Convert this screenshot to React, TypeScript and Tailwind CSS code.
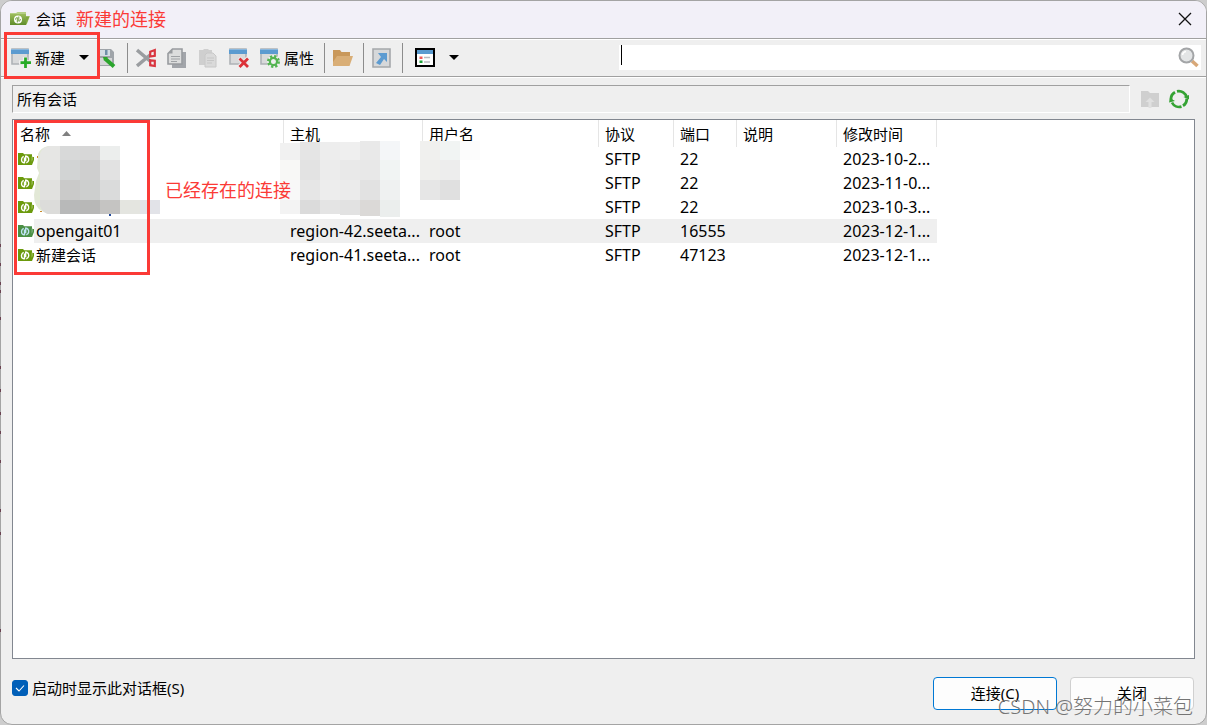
import React, { useState } from 'react';

type Session = {
  name: string;
  host: string;
  user: string;
  protocol: string;
  port: string;
  note: string;
  modified: string;
};

const sessions: Session[] = [
  { name: '', host: '', user: '', protocol: 'SFTP', port: '22', note: '', modified: '2023-10-2...' },
  { name: '', host: '', user: '', protocol: 'SFTP', port: '22', note: '', modified: '2023-11-0...' },
  { name: '', host: '', user: '', protocol: 'SFTP', port: '22', note: '', modified: '2023-10-3...' },
  { name: 'opengait01', host: 'region-42.seeta...', user: 'root', protocol: 'SFTP', port: '16555', note: '', modified: '2023-12-1...' },
  { name: '新建会话', host: 'region-41.seeta...', user: 'root', protocol: 'SFTP', port: '47123', note: '', modified: '2023-12-1...' },
];

const columns = ['主机', '用户名', '协议', '端口', '说明', '修改时间'];

// Blurred-out blocks: x, y, width, height, colour
const mosaic: [number, number, number, number, string][] = [
  [60, 146, 20, 14, '#d8d9d9'], [80, 146, 20, 14, '#d7d7d7'], [100, 146, 20, 14, '#eceeed'],
  [60, 160, 20, 20, '#d2d4d4'], [80, 160, 20, 20, '#cfcfcf'], [100, 160, 20, 20, '#e2e2e2'],
  [60, 180, 20, 20, '#cacac9'], [80, 180, 20, 20, '#cdcfce'], [100, 180, 20, 20, '#dadbdb'],
  [60, 200, 20, 14, '#b8b9b9'], [80, 200, 20, 14, '#b8b8b7'], [100, 200, 20, 14, '#c5c4c2'],
  [120, 200, 20, 14, '#e4e5e0'], [140, 200, 20, 14, '#e2e3e8'],
  [280, 143, 20, 17, '#f1f1f1'], [300, 142, 20, 18, '#e5e5e5'], [320, 142, 20, 18, '#ededed'],
  [340, 142, 20, 18, '#efefef'], [360, 141, 20, 19, '#e9e9e9'], [380, 141, 20, 19, '#f4f6f8'],
  [280, 160, 20, 20, '#f8f8f6'], [300, 160, 20, 20, '#e3e3e3'], [320, 160, 20, 20, '#ececec'],
  [340, 160, 20, 20, '#e9e9e9'], [360, 160, 20, 20, '#e8e8e8'], [380, 160, 20, 20, '#f1f4f3'],
  [280, 180, 20, 20, '#f8f8f8'], [300, 180, 20, 20, '#e6e6e6'], [320, 180, 20, 20, '#ededed'],
  [340, 180, 20, 20, '#ebebeb'], [360, 180, 20, 20, '#e2e2e2'], [380, 180, 20, 20, '#eff1f1'],
  [280, 200, 20, 14, '#f3f3f3'], [300, 200, 20, 14, '#dbdbdb'], [320, 200, 20, 14, '#e4e4e4'],
  [340, 200, 20, 15, '#e2e2e2'], [360, 200, 20, 16, '#dbd9d7'], [380, 200, 20, 17, '#ebeeed'],
  [420, 141, 20, 19, '#f0f0ee'], [440, 141, 20, 19, '#f1f4f3'], [460, 141, 20, 19, '#fcfcfc'],
  [420, 160, 20, 20, '#efefed'], [440, 160, 20, 20, '#ededed'],
  [420, 180, 20, 20, '#e6e6e6'], [440, 180, 20, 20, '#e0e0e0'],
];

const specks = [245, 264, 283, 291, 318, 367, 390, 413, 432, 461, 510, 533, 630];

const SessionIcon = ({ selected = false }: { selected?: boolean }) => (
  <svg width="16" height="12" viewBox="0 0 16 12" className="shrink-0" aria-hidden="true">
    <path d="M0 0h5l1.2 1.2H14V4h2v3l-2 5H0z" fill={selected ? '#4b8f45' : '#6b9a0c'} />
    <path d="M13.6 3.5h1v3.2l-1 2z" fill={selected ? '#8dbb8b' : '#a9c46c'} />
    <g fill="none" stroke={selected ? '#bfe3f4' : '#fff'} strokeWidth="1.4">
      <path d="M5.700 3.300C3.300 4.300 2.800 7.800 4.600 9.400M6.500 4.500v5.800" />
      <path d="M8.300 9.800c2.700-.8 3.200-4.400 1.200-5.900M7.700 8.300V2.600" />
      <path d="M7.700 3.200c1 0 1.700.3 2.200 1M6.500 9.700c-.9 0-1.600-.3-2-.9" />
    </g>
  </svg>
);

const TitleIcon = () => (
  <svg width="20" height="14" viewBox="0 0 20 14" aria-hidden="true">
    <defs>
      <linearGradient id="folder" x1="0" y1="0" x2="0" y2="1">
        <stop offset="0" stopColor="#9cbc5c" />
        <stop offset="1" stopColor="#5f8c2a" />
      </linearGradient>
    </defs>
    <path d="M0 1h6l1.5-1H16v4h4l-3.5 9H0z" fill="#b5cf86" />
    <path d="M0 2h16v11H0z" fill="url(#folder)" />
    <path d="M16 4.5h3.4L16.6 12H16z" fill="#7fa53f" />
    <circle cx="8" cy="7.4" r="4" fill="#fff" />
    <path d="M7.3 10.4V5.6c-1.4.2-1.9 1-1.8 2M8.8 4.5v4.7c1.4-.2 1.8-1.1 1.6-2.1" fill="none" stroke="#6f9a3a" />
  </svg>
);

const Icon = ({ children }: { children: React.ReactNode }) => (
  <svg width="20" height="20" viewBox="0 0 20 20" className="shrink-0" aria-hidden="true">
    {children}
  </svg>
);

const WindowShape = () => (
  <>
    <path d="M1 1h16v15H1z" fill="#d9dadb" stroke="#aeb2b6" strokeWidth="1.6" />
    <path d="M0 1h18v5H0z" fill="#5b9bd0" />
    <path d="M0 1h18v1H0z" fill="#8bb8de" />
  </>
);

const NewIcon = () => (
  <Icon>
    <WindowShape />
    <path d="M14 9v11M8 14.500h12" stroke="#efefef" strokeWidth="4.4" />
    <path d="M14.500 9.500V20M9.500 14.700H20" stroke="#27ab27" strokeWidth="2.8" />
  </Icon>
);

const SaveIcon = () => (
  <Icon>
    <path d="M0 1h14l3 3v14H0z" fill="#9fa4a9" />
    <path d="M0 2h13v6H0z" fill="#d3dde5" />
    <path d="M8 2h2.500v5H8z" fill="#6f8fa8" />
    <path d="M0 10h15v7H0z" fill="#d5d6d7" />
    <path d="m8.500 11 8.500 7.500" stroke="#2aa52c" strokeWidth="4" />
    <path d="m6 9 1 4 4-4z" fill="#2aa52c" />
  </Icon>
);

const CutIcon = () => (
  <Icon>
    <path d="M1 2 14 13M1 18 14 7" stroke="#9a9da0" strokeWidth="3.4" />
    <g fill="none" stroke="#d93640" strokeWidth="2.2">
      <path d="M14.200 3.700 18.800 2v5.800l-4.600.700zM14.200 12.300l4.600.400V18l-4.600-.8z" />
    </g>
  </Icon>
);

const CopyIcon = () => (
  <Icon>
    <path d="M7 4h12v16H5v-3z" fill="#a2a5aa" />
    <path d="M5.500 1H15v15H1V5.500z" fill="#dcdddd" stroke="#989b9f" strokeWidth="1.6" />
    <path d="M5.500 1v4.500H1z" fill="#989b9f" />
    <path d="M4 8.500h9M4 11h9M4 13.500h6" stroke="#9fa2a5" />
  </Icon>
);

const PasteIcon = () => (
  <Icon>
    <path d="M1 2h4l1-1h4l1 1h3v15H1z" fill="#cfcfcf" />
    <path d="M9 5h6l3 3v11H7V7z" fill="#dadada" stroke="#c8c8c8" />
    <path d="M9 10h7M9 12.500h7M9 15h5" stroke="#c6c6c6" />
  </Icon>
);

const DeleteIcon = () => (
  <Icon>
    <WindowShape />
    <path d="m10 10 9 9m0-9-9 9" stroke="#efefef" strokeWidth="4" />
    <path d="m10.500 10.500 8.500 8.500m0-8.500-8.500 8.500" stroke="#dc3238" strokeWidth="2.800" />
  </Icon>
);

const PropertiesIcon = () => (
  <Icon>
    <WindowShape />
    <circle cx="13.500" cy="13.500" r="6.500" fill="#efefef" />
    <circle cx="13.500" cy="13.500" r="5.200" fill="none" stroke="#53b451" strokeWidth="2.600" strokeDasharray="2.200 1.884" />
    <circle cx="13.500" cy="13.500" r="3.600" fill="none" stroke="#53b451" strokeWidth="2.200" />
  </Icon>
);

const FolderIcon = () => (
  <Icon>
    <path d="M0 2h7l1.500 2H17v4H5l-5 9z" fill="#c9985a" />
    <path d="M0 8h20l-3.500 10H0z" fill="#d9ae76" />
    <path d="M0 8h4L0 14z" fill="#c9985a" />
  </Icon>
);

const ShortcutIcon = () => (
  <Icon>
    <path d="M1 1h17v18H1z" fill="#d6d8da" stroke="#a5a8ab" strokeWidth="1.600" />
    <path d="M6 5h9v9l-3-3-4 6-4-2 5-6z" fill="#5c9bd1" />
  </Icon>
);

const ViewIcon = () => (
  <Icon>
    <path d="M1 1h18v17H1z" fill="#fff" stroke="#000" strokeWidth="2" />
    <path d="M2 2h16v4H2z" fill="#5b9bd0" />
    <path d="M4.500 8.500h3v2.500h-3z" fill="#f05a5a" />
    <path d="M4.500 12.500h3V15h-3z" fill="#1fa33a" />
    <path d="M9 9.500h6M9 14h6" stroke="#b9bbc0" strokeWidth="1.400" />
  </Icon>
);

const Caret = () => (
  <svg width="10" height="5" viewBox="0 0 10 5" className="shrink-0" aria-hidden="true">
    <path d="M0 0h10L5 5z" fill="#000" />
  </svg>
);

const SearchIcon = () => (
  <svg width="21" height="21" viewBox="0 0 21 21" aria-hidden="true">
    <path d="m14 14 5.500 5" stroke="#d8a878" strokeWidth="3.600" />
    <circle cx="8.500" cy="8.500" r="7" fill="#e3e5e6" stroke="#a3a5a7" strokeWidth="2" />
    <path d="M4.500 8a4 4 0 0 1 3.500-3.500" fill="none" stroke="#fff" strokeWidth="1.500" />
  </svg>
);

const FolderUpIcon = () => (
  <Icon>
    <path d="M1 2h7l2 2h9v14H1z" fill="#cfcfcf" />
    <path d="M10 8.500 14.500 13h-3v6h-3v-6h-3z" fill="#e0e0e0" />
  </Icon>
);

const RefreshIcon = () => (
  <Icon>
    <g fill="none" stroke="#35a334" strokeWidth="2.800">
      <path d="M2.300 12A8 8 0 0 1 6 3.200" />
      <path d="M8 2.300a8 8 0 0 1 9.700 6.200" />
      <path d="M17.700 9.500A8 8 0 0 1 14 16.800" />
      <path d="M12.500 17.600A8 8 0 0 1 3 13.500" />
    </g>
    <path d="m14.500 8 5.500 2.500V6zM0 13.500 1 9l5 3z" fill="#35a334" />
  </Icon>
);

const Separator = () => <div className="mr-2 ml-[10px] h-[30px] w-px shrink-0 bg-[#8c8c8c]" />;

const ToolButton = ({ label, children }: { label: string; children: React.ReactNode }) => (
  <button type="button" aria-label={label} className="flex shrink-0 items-center">
    {children}
  </button>
);

export default function App() {
  const [showOnStart, setShowOnStart] = useState(true);
  const [query, setQuery] = useState('');

  return (
    <div className="relative min-h-screen bg-[#cdcdcd] font-['Noto_Sans','Noto_Sans_CJK_SC',sans-serif] text-[15px] leading-5 text-black">
      <div className="flex min-h-screen flex-col overflow-hidden rounded-xl border border-[#a4a4a4] bg-[#efefef]">
        <header className="flex h-[37px] shrink-0 items-center bg-[#f2f0f8] pr-[14px] pb-px pl-[9px]">
          <TitleIcon />
          <h1 className="ml-[6px]">会话</h1>
          <span className="ml-[10px] text-[18px] text-[#fb3a36]">新建的连接</span>
          <button type="button" aria-label="关闭窗口" className="ml-auto">
            <svg width="14" height="14" viewBox="0 0 14 14" aria-hidden="true">
              <path d="m1 1 12 12M13 1 1 13" stroke="#111" strokeWidth="1.300" />
            </svg>
          </button>
        </header>

        <div className="flex h-[39px] shrink-0 items-center border-y border-t-[#a0a0a0] border-b-[#a0a0a0] pr-[5px] pl-[10px] shadow-[inset_0_1px_0_#fff,0_1px_0_#fff]">
          <button type="button" className="flex shrink-0 items-center gap-1">
            <NewIcon />
            新建
          </button>
          <button type="button" aria-label="新建菜单" className="ml-[14px] flex h-5 items-center">
            <Caret />
          </button>
          <div className="ml-2">
            <ToolButton label="保存"><SaveIcon /></ToolButton>
          </div>
          <Separator />
          <div className="flex shrink-0 items-center gap-[11px]">
            <ToolButton label="剪切"><CutIcon /></ToolButton>
            <ToolButton label="复制"><CopyIcon /></ToolButton>
            <ToolButton label="粘贴"><PasteIcon /></ToolButton>
            <ToolButton label="删除"><DeleteIcon /></ToolButton>
            <button type="button" className="flex items-center gap-1">
              <PropertiesIcon />
              属性
            </button>
          </div>
          <Separator />
          <ToolButton label="打开文件夹"><FolderIcon /></ToolButton>
          <Separator />
          <ToolButton label="快捷方式"><ShortcutIcon /></ToolButton>
          <Separator />
          <div className="ml-1">
            <ToolButton label="视图"><ViewIcon /></ToolButton>
          </div>
          <button type="button" aria-label="视图菜单" className="ml-[14px] flex h-5 items-center">
            <Caret />
          </button>
          <div className="ml-40 flex h-[25px] flex-1 items-center bg-white">
            <div className="ml-[2px] h-5 w-px self-start bg-black" />
            <input
              type="text"
              aria-label="搜索"
              value={query}
              onChange={(e) => setQuery(e.target.value)}
              className="h-full min-w-0 flex-1 bg-transparent px-1 outline-none"
            />
            <button type="button" aria-label="查找" className="mr-[2px]">
              <SearchIcon />
            </button>
          </div>
        </div>

        <div className="mt-2 flex shrink-0 items-center pr-[17px] pl-[11px]">
          <div className="flex h-7 flex-1 items-center border border-t-[#a0a0a0] border-r-white border-b-white border-l-[#a0a0a0] pl-1">
            所有会话
          </div>
          <div className="ml-[10px] flex items-center gap-[9px]">
            <ToolButton label="上一级"><FolderUpIcon /></ToolButton>
            <ToolButton label="刷新"><RefreshIcon /></ToolButton>
          </div>
        </div>

        <main className="relative mx-[11px] mt-[6px] flex-1 border border-[#828790] bg-white">
          <table className="w-[924px] table-fixed border-collapse text-left">
            <colgroup>
              <col className="w-[271px]" />
              <col className="w-[139px]" />
              <col className="w-[176px]" />
              <col className="w-[75px]" />
              <col className="w-[63px]" />
              <col className="w-[100px]" />
              <col className="w-[100px]" />
            </colgroup>
            <thead>
              <tr className="h-[27px]">
                <th className="p-0 pl-[7px] font-normal shadow-[inset_-1px_0_0_#e5e5e5]">
                  <span className="flex items-center gap-3">
                    名称
                    <svg width="9" height="5" viewBox="0 0 9 5" aria-hidden="true">
                      <path d="M4.500 0 9 5H0z" fill="#808080" />
                    </svg>
                  </span>
                </th>
                {columns.map((column) => (
                  <th key={column} className="p-0 pl-[6px] font-normal shadow-[inset_-1px_0_0_#e5e5e5]">
                    {column}
                  </th>
                ))}
              </tr>
            </thead>
            <tbody>
              {sessions.map((session, index) => {
                const selected = session.name === 'opengait01';
                const cell = selected ? 'bg-[#efefef] p-0 pl-[6px] text-[16px]' : 'p-0 pl-[6px] text-[16px]';
                return (
                  <tr key={index} className="h-6 whitespace-nowrap">
                    <td className="p-0 pl-[5px]">
                      <div className="flex items-center">
                        <SessionIcon selected={selected} />
                        <span className={selected ? 'h-6 flex-1 bg-[#efefef] pl-[2px] text-[16px] leading-6' : 'h-6 flex-1 pl-[2px] leading-6'}>
                          {session.name}
                        </span>
                      </div>
                    </td>
                    <td className={cell}>{session.host}</td>
                    <td className={cell}>{session.user}</td>
                    <td className={cell}>{session.protocol}</td>
                    <td className={cell}>{session.port}</td>
                    <td className={cell}>{session.note}</td>
                    <td className={cell}>{session.modified}</td>
                  </tr>
                );
              })}
            </tbody>
          </table>

          <svg width="480" height="120" viewBox="13 120 480 120" className="pointer-events-none absolute top-0 left-0" aria-hidden="true">
            <path d="M48 146q-8 2-10 8l-1 14 2 5-3 8-2 14q0 12 8 16l6 3h12v-68z" fill="#e2e8d6" />
            <path d="M50 146q-8 1-10 8v50q3 8 8 10h12v-68z" fill="#e6e6e4" />
            <path d="M40 180h20v20H40z" fill="#e1e1df" />
            <path d="M40 200h20v14H48q-6-2-8-8z" fill="#dcdcda" />
            {mosaic.map(([x, y, width, height, fill]) => (
              <rect key={`${x}-${y}`} x={x} y={y} width={width} height={height} fill={fill} />
            ))}
            <path d="M109 214h2v2h-2z" fill="#234a9a" />
            <path d="M37 156h1v2h-1zM40 211h2v1h-2z" fill="#c98a2c" />
          </svg>
          <div className="pointer-events-none absolute top-0 left-px h-[155px] w-[136px] border-3 border-[#fb3a36]" />
          <p className="absolute top-[60px] left-[152px] text-[18px] text-[#fb3a36]">已经存在的连接</p>
        </main>

        <footer className="flex shrink-0 items-start justify-between pt-[18px] pr-3 pb-[14px] pl-[11px]">
          <label className="mt-px flex items-center gap-1">
            <span className="relative flex size-4">
              <input
                type="checkbox"
                checked={showOnStart}
                onChange={(e) => setShowOnStart(e.target.checked)}
                className="peer size-4 appearance-none rounded-[3px] border border-[#005fb8] bg-white checked:bg-[#005fb8]"
              />
              <svg width="16" height="16" viewBox="0 0 16 16" className="pointer-events-none absolute inset-0 hidden peer-checked:block" aria-hidden="true">
                <path d="m4 8 3 3 5-5.500" fill="none" stroke="#fff" strokeWidth="1.100" />
              </svg>
            </span>
            启动时显示此对话框(S)
          </label>
          <div className="flex gap-[13px]">
            <button type="button" className="h-[33px] w-[124px] rounded border border-[#0078d4] bg-[#fdfdfd] pb-[2px]">
              连接(C)
            </button>
            <button type="button" className="h-[33px] w-[124px] rounded border border-[#d0d0d0] bg-[#fdfdfd] pb-[2px]">
              关闭
            </button>
          </div>
        </footer>
      </div>

      <div className="pointer-events-none absolute top-8 left-1 h-[47px] w-24 border-3 border-[#fb3a36]" />
      <svg width="1" height="725" viewBox="0 0 1 725" className="pointer-events-none absolute top-0 left-0" aria-hidden="true">
        {specks.map((y) => (
          <rect key={y} x="0" y={y - 1} width="1" height="3" fill="#6a4250" />
        ))}
      </svg>
      <p className="pointer-events-none absolute right-[14px] bottom-[6px] text-[20px] leading-6 font-light text-[#757575]">CSDN @努力的小菜包</p>
    </div>
  );
}
